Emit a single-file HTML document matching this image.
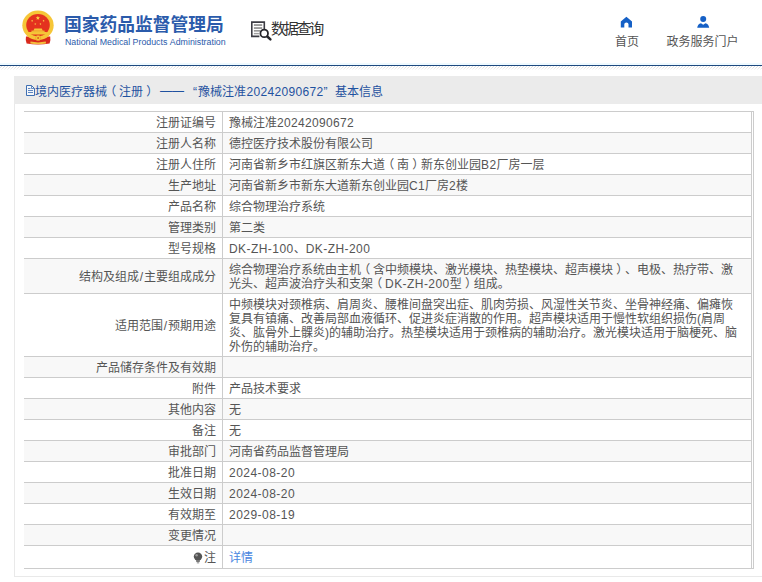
<!DOCTYPE html>
<html lang="zh-CN">
<head>
<meta charset="utf-8">
<title>国家药品监督管理局 数据查询</title>
<style>
html,body{margin:0;padding:0;background:#fff;}
body{width:762px;height:582px;overflow:hidden;position:relative;font-family:"Liberation Sans","Noto Sans CJK SC",sans-serif;font-size:12px;color:#555;font-weight:400;text-spacing-trim:space-all;font-kerning:none;}
.abs{position:absolute;white-space:nowrap;}
#logo-cn{left:64px;top:12px;font-size:17.75px;line-height:26px;font-weight:bold;color:#2b5bab;letter-spacing:0;}
#logo-en{left:65px;top:36px;font-size:8.82px;line-height:13px;color:#2b5bab;}
#dq{font-weight:400;left:271px;top:18px;font-size:15px;line-height:22px;color:#333;letter-spacing:-2.25px;}
.nav{font-size:12px;line-height:16px;color:#555;}
#blue{left:0;top:65px;width:762px;height:1px;background:#1e4a80;}
#tint{left:0;top:63px;width:762px;height:2px;background:#effaff;}
#hatch{left:0;top:66px;width:762px;height:4px;background:linear-gradient(to bottom,rgba(255,255,255,0) 0,rgba(255,255,255,.15) 40%,rgba(255,255,255,.85) 100%),repeating-linear-gradient(135deg,#fff 0,#fff 1.32px,#dcdcdc 1.32px,#dcdcdc 2.12px);}
#bar{left:14px;top:76px;width:748px;height:28px;background:#ebebeb;}
#bartxt{left:35px;top:84px;font-size:12px;line-height:16px;color:#1f52a0;}
#box{left:14px;top:104px;width:760px;height:472px;border-left:1px solid #e9e9e9;border-bottom:1px solid #e9e9e9;}
table{position:absolute;left:24px;top:111px;width:728px;border-collapse:separate;border-spacing:0;table-layout:fixed;}
td{border-top:1px solid #ccc;border-right:1px solid #ccc;padding:4px 5px 2px 6px;line-height:14px;font-size:12px;vertical-align:middle;color:#555;}
td.l{width:186px;text-align:right;padding-right:6px;}
tr:nth-child(even) td{background:#f8f8f8;}
tr:last-child td{border-bottom:1px solid #ccc;height:16px;}
.s{padding:0 .8px;color:#555;}
.po{position:relative;left:-2.8px;}
.pc{position:relative;left:3.2px;}
.n{letter-spacing:.33px;color:#555;}
.m{letter-spacing:.44px;color:#555;}
.d{letter-spacing:.47px;}
#bartxt .n{color:#1f52a0;}
#rb{left:753px;top:111px;width:1px;height:458px;background:#ccc;}
.tb{left:24px;top:111px;width:730px;height:1px;background:#ccc;}
a{color:#4a86e0;text-decoration:none;}
</style>
</head>
<body>
<!-- header -->
<svg class="abs" style="left:18px;top:6px" width="40" height="42" viewBox="18 6 40 42">
  <path d="M26 36.5 Q25.2 40 26.6 43.4 Q38 45.6 49.6 43.4 Q50.9 40 50.2 36.5 Z" fill="#d9291c"/>
  <path d="M30.5 41.6 Q38 43.2 45.8 41.6 L46 43.6 Q38 45 30.3 43.6 Z" fill="#f3bf3d"/>
  <ellipse cx="38" cy="25.3" rx="15.7" ry="14.7" fill="#f6c638"/>
  <ellipse cx="38" cy="25.1" rx="11.8" ry="11.2" fill="#e4321f"/>
  <rect x="28.8" y="32" width="18.2" height="2.4" rx="0.6" fill="#f6c638"/>
  <rect x="31.4" y="30.6" width="13.2" height="1.6" fill="#f0b935"/>
  <path d="M33.4 30.8 L34.4 28.5 H41.8 L42.8 30.8 Z" fill="#f6c638"/>
  <circle cx="38.1" cy="38" r="2.6" fill="#f6c638" stroke="#e8a02c" stroke-width="0.6"/>
  <circle cx="38.1" cy="38" r="1" fill="#e0601f"/>
  <polygon points="37.90,15.70 38.47,17.22 40.09,17.29 38.82,18.30 39.25,19.86 37.90,18.97 36.55,19.86 36.98,18.30 35.71,17.29 37.33,17.22" fill="#f9d548"/>
  <polygon points="32.65,19.85 32.52,20.61 33.18,21.03 32.41,21.14 32.21,21.89 31.87,21.20 31.10,21.25 31.65,20.70 31.36,19.98 32.05,20.34" fill="#f9d548"/>
  <polygon points="43.05,19.85 43.65,20.34 44.34,19.98 44.05,20.70 44.60,21.25 43.83,21.20 43.49,21.89 43.29,21.14 42.52,21.03 43.18,20.61" fill="#f9d548"/>
  <polygon points="35.49,22.92 35.63,23.68 36.39,23.85 35.71,24.22 35.78,24.99 35.22,24.45 34.51,24.76 34.84,24.06 34.33,23.48 35.10,23.58" fill="#f9d548"/>
  <polygon points="40.21,22.92 40.60,23.58 41.37,23.48 40.86,24.06 41.19,24.76 40.48,24.45 39.92,24.99 39.99,24.22 39.31,23.85 40.07,23.68" fill="#f9d548"/>
</svg>
<div class="abs" id="logo-cn">国家药品监督管理局</div>
<div class="abs" id="logo-en">National Medical Products Administration</div>

<svg class="abs" style="left:250px;top:20px" width="24" height="22" viewBox="0 0 24 22">
  <path d="M14.3 10 V2.1 H1.8 V16.4 H9.4" fill="none" stroke="#3c3c44" stroke-width="1.6"/>
  <rect x="3.9" y="4.2" width="8.3" height="1.7" fill="#909090"/>
  <rect x="3.9" y="7.2" width="8.3" height="1.7" fill="#909090"/>
  <rect x="3.9" y="10.1" width="6.3" height="1.5" fill="#909090"/>
  <rect x="3.9" y="12.9" width="5" height="1.4" fill="#a0a0a0"/>
  <circle cx="14.2" cy="13.4" r="3.8" fill="#fff" stroke="#26262c" stroke-width="1.8"/>
  <path d="M17.3 16.5 L20.4 19.4" stroke="#26262c" stroke-width="2.5" stroke-linecap="round"/>
</svg>
<div class="abs" id="dq">数据查询</div>

<svg class="abs" style="left:620px;top:16px" width="13" height="13" viewBox="0 0 13 13">
  <path d="M6.4 0.8 L12 5.6 V11.6 H8.5 V8.2 A2.1 1.6 0 0 0 4.3 8.2 V11.6 H0.8 V5.6 Z" fill="#1560c6"/>
</svg>
<div class="abs nav" style="left:615px;top:34px">首页</div>
<svg class="abs" style="left:696px;top:15px" width="14" height="14" viewBox="0 0 14 14">
  <circle cx="7.2" cy="3.9" r="3" fill="#1560c6"/>
  <path d="M1.2 12.8 Q1.6 9 5 8.2 L7.2 9.8 L9.4 8.2 Q12.8 9 13.2 12.8 Z" fill="#1560c6"/>
</svg>
<div class="abs nav" style="left:666.5px;top:34px">政务服务门户</div>

<div class="abs" id="tint"></div>
<div class="abs" id="blue"></div>
<div class="abs" id="hatch"></div>

<!-- title bar -->
<div class="abs" id="bar"></div>
<svg class="abs" style="left:26px;top:85px" width="10" height="11" viewBox="0 0 10 11">
  <path d="M0.5 0.5 H5.5 L8.5 3.5 V10.5 H0.5 Z" fill="#f3f6fa" stroke="#3f6fb2" stroke-width="1"/>
  <path d="M5.5 0.5 V3.5 H8.5" fill="none" stroke="#3f6fb2" stroke-width="0.8"/>
  <path d="M2 3.5 H4.5 M2 5.5 H7 M2 7.5 H7" stroke="#5f86c0" stroke-width="1"/>
</svg>
<div class="abs" id="bartxt"><span class="abs" style="left:0">境内医疗器械<span class="po">（</span>注册<span class="pc">）</span></span><span class="abs" style="left:125px;top:-1px">——</span><span class="abs" style="left:158px">“</span><span class="abs" style="left:163px">豫械注准</span><span class="abs n" style="left:211.5px">20242090672</span><span class="abs" style="left:288.5px">”</span><span class="abs" style="left:300px">基本信息</span></div>

<div class="abs" id="box"></div>

<table cellspacing="0" cellpadding="0">
<tr><td class="l">注册证编号</td><td>豫械注准<span class="n">20242090672</span></td></tr>
<tr><td class="l">注册人名称</td><td>德控医疗技术股份有限公司</td></tr>
<tr><td class="l">注册人住所</td><td>河南省新乡市红旗区新东大道<span class="po">（</span>南<span class="pc">）</span>新东创业园<span class="n">B2</span>厂房一层</td></tr>
<tr><td class="l">生产地址</td><td>河南省新乡市新东大道新东创业园<span class="n">C1</span>厂房<span class="n">2</span>楼</td></tr>
<tr><td class="l">产品名称</td><td>综合物理治疗系统</td></tr>
<tr><td class="l">管理类别</td><td>第二类</td></tr>
<tr><td class="l">型号规格</td><td><span class="m">DK-ZH-100</span>、<span class="m">DK-ZH-200</span></td></tr>
<tr><td class="l">结构及组成<span class="s">/</span>主要组成成分</td><td>综合物理治疗系统由主机<span class="po">（</span>含中频模块、激光模块、热垫模块、超声模块<span class="pc">）</span>、电极、热疗带、激<br>光头、超声波治疗头和支架<span class="po">（</span><span class="m">DK-ZH-200</span>型<span class="pc">）</span>组成。</td></tr>
<tr><td class="l">适用范围<span class="s">/</span>预期用途</td><td>中频模块对颈椎病、肩周炎、腰椎间盘突出症、肌肉劳损、风湿性关节炎、坐骨神经痛、偏瘫恢<br>复具有镇痛、改善局部血液循环、促进炎症消散的作用。超声模块适用于慢性软组织损伤(肩周<br>炎、肱骨外上髁炎)的辅助治疗。热垫模块适用于颈椎病的辅助治疗。激光模块适用于脑梗死、脑<br>外伤的辅助治疗。</td></tr>
<tr><td class="l">产品储存条件及有效期</td><td></td></tr>
<tr><td class="l">附件</td><td>产品技术要求</td></tr>
<tr><td class="l">其他内容</td><td>无</td></tr>
<tr><td class="l">备注</td><td>无</td></tr>
<tr><td class="l">审批部门</td><td>河南省药品监督管理局</td></tr>
<tr><td class="l">批准日期</td><td><span class="n d">2024-08-20</span></td></tr>
<tr><td class="l">生效日期</td><td><span class="n d">2024-08-20</span></td></tr>
<tr><td class="l">有效期至</td><td><span class="n d">2029-08-19</span></td></tr>
<tr><td class="l">变更情况</td><td></td></tr>
<tr><td class="l"><svg width="10" height="12" viewBox="0 0 10 12" style="vertical-align:-2px;margin-right:1px"><circle cx="5" cy="4.6" r="4.2" fill="#555"/><path d="M3.2 8 H6.8 V10 H3.2 Z" fill="#777"/><rect x="3.8" y="10.2" width="2.4" height="1.2" fill="#999"/><circle cx="3.6" cy="3.2" r="1.2" fill="#9a9a9a"/></svg>注</td><td><a>详情</a></td></tr>
</table>
<div class="abs" id="rb"></div>
<div class="abs tb"></div>
<div class="abs tb" style="top:568px"></div>
</body>
</html>
